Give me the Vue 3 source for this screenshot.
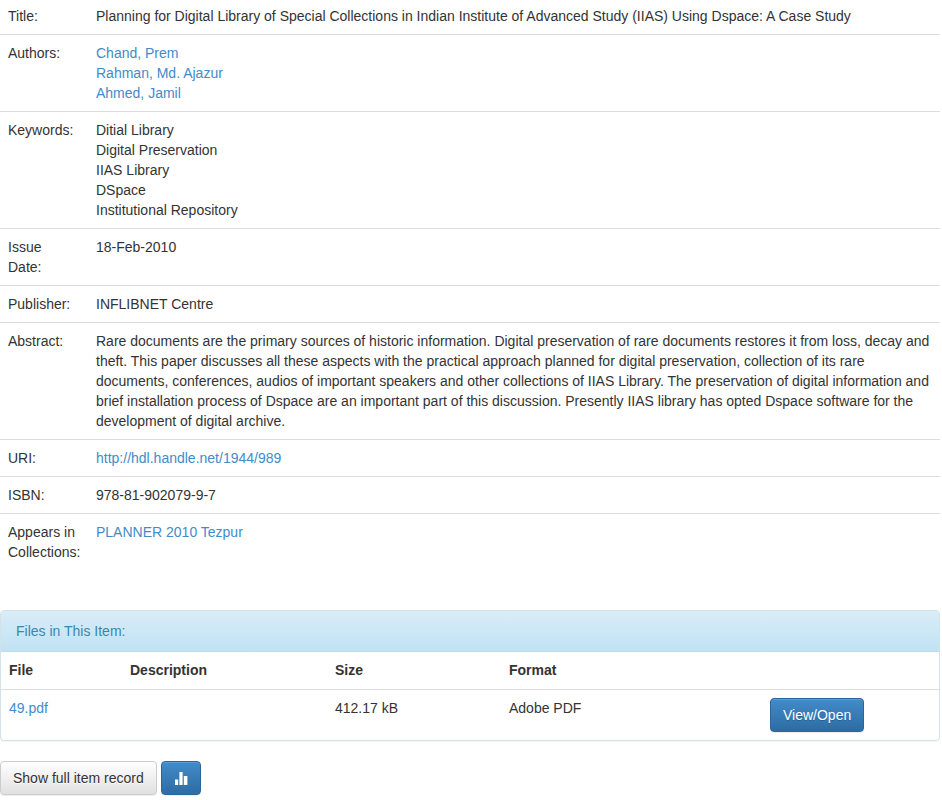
<script setup>
const rows = [
  { label: ['Title:'], lines: ['Planning for Digital Library of Special Collections in Indian Institute of Advanced Study (IIAS) Using Dspace: A Case Study'] },
  { label: ['Authors:'], links: ['Chand, Prem', 'Rahman, Md. Ajazur', 'Ahmed, Jamil'] },
  { label: ['Keywords:'], lines: ['Ditial Library', 'Digital Preservation', 'IIAS Library', 'DSpace', 'Institutional Repository'] },
  { label: ['Issue', 'Date:'], lines: ['18-Feb-2010'] },
  { label: ['Publisher:'], lines: ['INFLIBNET Centre'] },
  { label: ['Abstract:'], lines: ['Rare documents are the primary sources of historic information. Digital preservation of rare documents restores it from loss, decay and theft. This paper discusses all these aspects with the practical approach planned for digital preservation, collection of its rare documents, conferences, audios of important speakers and other collections of IIAS Library. The preservation of digital information and brief installation process of Dspace are an important part of this discussion. Presently IIAS library has opted Dspace software for the development of digital archive.'] },
  { label: ['URI:'], links: ['http://hdl.handle.net/1944/989'] },
  { label: ['ISBN:'], lines: ['978-81-902079-9-7'] },
  { label: ['Appears in', 'Collections:'], links: ['PLANNER 2010 Tezpur'] },
]
</script>

<template>
  <div class="page">
    <table class="meta">
      <colgroup><col class="meta-label" /><col /></colgroup>
      <tbody>
        <tr v-for="(row, i) in rows" :key="i">
          <td>
            <div v-for="l in row.label" :key="l">{{ l }}</div>
          </td>
          <td>
            <template v-if="row.links">
              <div v-for="l in row.links" :key="l"><a href="#">{{ l }}</a></div>
            </template>
            <template v-else>
              <div v-for="l in row.lines" :key="l">{{ l }}</div>
            </template>
          </td>
        </tr>
      </tbody>
    </table>

    <div class="panel">
      <div class="panel-heading">Files in This Item:</div>
      <table class="files">
        <colgroup>
          <col class="c-file" /><col class="c-desc" /><col class="c-size" /><col class="c-format" /><col />
        </colgroup>
        <thead>
          <tr>
            <th>File</th>
            <th>Description</th>
            <th>Size</th>
            <th>Format</th>
            <th></th>
          </tr>
        </thead>
        <tbody>
          <tr>
            <td><a href="#">49.pdf</a></td>
            <td></td>
            <td>412.17 kB</td>
            <td>Adobe PDF</td>
            <td><a class="btn btn-primary" href="#">View/Open</a></td>
          </tr>
        </tbody>
      </table>
    </div>

    <div class="actions">
      <a class="btn btn-default" href="#">Show full item record</a>
      <a class="btn btn-primary btn-icon" href="#" aria-label="Statistics">
        <svg width="14" height="14" viewBox="0 0 14 14" fill="#fff">
          <rect x="1" y="8.5" width="3.2" height="5.5" />
          <rect x="5.4" y="1" width="3.2" height="13" />
          <rect x="9.8" y="5" width="3.6" height="9" />
        </svg>
      </a>
    </div>
  </div>
</template>

<style>
body {
  margin: 0;
  background: #fff;
  font-family: "Liberation Sans", Arial, sans-serif;
  font-size: 14px;
  line-height: 20px;
  color: #333;
}
</style>

<style scoped>
.page {
  width: 940px;
  height: 800px;
  overflow: hidden;
}
a {
  color: #428bca;
  text-decoration: none;
}
table {
  width: 100%;
  border-collapse: collapse;
  border-spacing: 0;
  table-layout: fixed;
}
td,
th {
  padding: 8px;
  vertical-align: top;
  text-align: left;
}
.meta-label {
  width: 88px;
}
.meta td {
  border-top: 1px solid #ddd;
}
.meta tr:first-child td {
  border-top: 0;
  padding-top: 6px;
}
.meta {
  margin-bottom: 40px;
}
.panel {
  border: 1px solid #d3e2e6;
  border-radius: 4px;
  box-shadow: 0 1px 1px rgba(0, 0, 0, 0.05);
  overflow: hidden;
  margin-bottom: 20px;
}
.panel-heading {
  padding: 10px 15px;
  color: #3a87ad;
  background: linear-gradient(to bottom, #d9edf7 0, #c1e2f5 100%);
  border-bottom: 1px solid #bcdcea;
}
.c-file {
  width: 121px;
}
.c-desc {
  width: 205px;
}
.c-size {
  width: 174px;
}
.c-format {
  width: 261px;
}
.files th {
  font-weight: 700;
  padding-bottom: 9px;
}
.files td {
  border-top: 1px solid #ddd;
}
.btn {
  display: inline-block;
  box-sizing: border-box;
  padding: 6px 12px;
  border: 1px solid transparent;
  border-radius: 4px;
  font-size: 14px;
  line-height: 20px;
  text-shadow: 0 1px 0 rgba(0, 0, 0, 0.2);
  box-shadow: inset 0 1px 0 rgba(255, 255, 255, 0.15), 0 1px 1px rgba(0, 0, 0, 0.075);
}
.btn-primary {
  color: #fff;
  background: linear-gradient(to bottom, #428bca 0, #2d6ca2 100%);
  border-color: #2b669a;
}
.btn-default {
  color: #333;
  background: linear-gradient(to bottom, #fff 0, #e0e0e0 100%);
  border-color: #ccc;
  text-shadow: 0 1px 0 #fff;
}
.actions {
  display: flex;
  gap: 4px;
}
.btn-icon {
  display: flex;
  align-items: center;
  justify-content: center;
  width: 40px;
  padding: 6px 0;
}
</style>
